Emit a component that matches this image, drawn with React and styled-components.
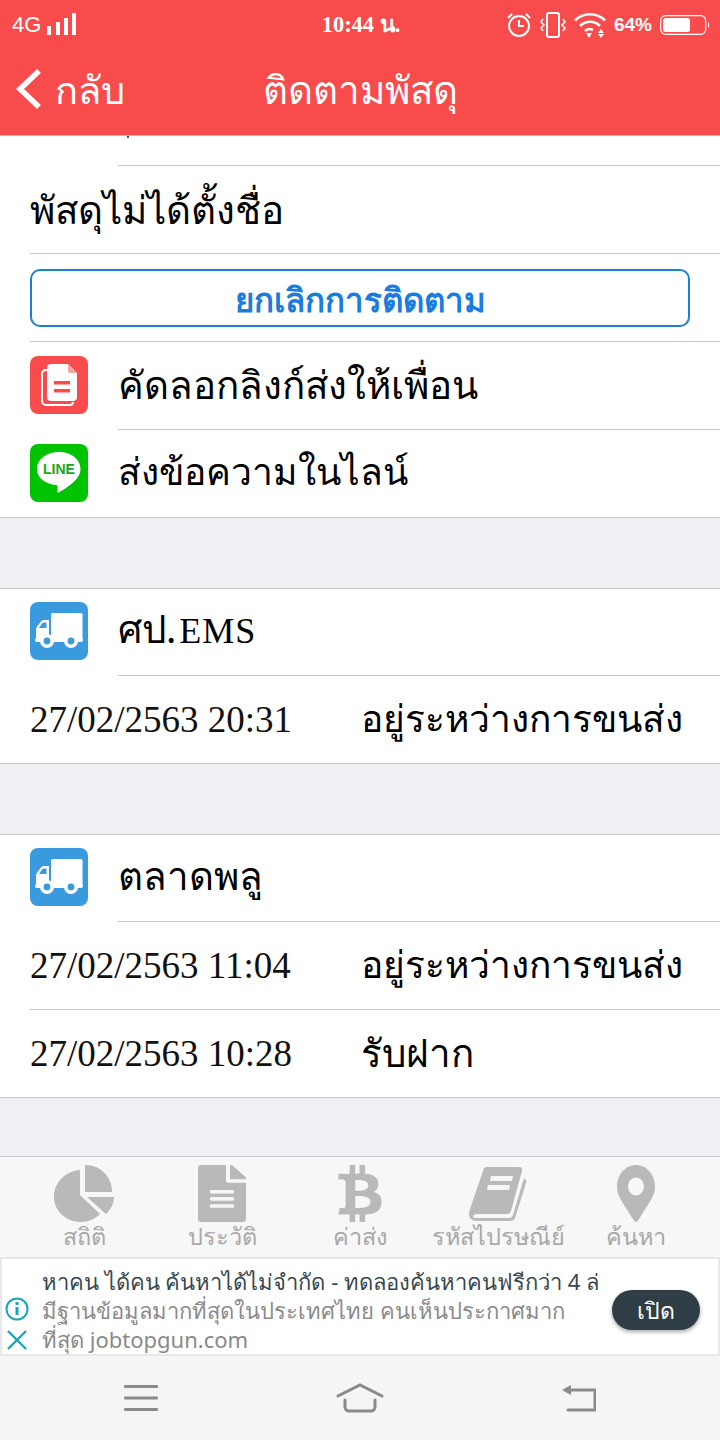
import React from 'react';
import styled, { createGlobalStyle } from 'styled-components';
import { FaFileAlt, FaBtc, FaMapMarkerAlt } from 'react-icons/fa';

const THAI = '"Noto Sans", "DejaVu Sans", "Liberation Sans", sans-serif';

const GlobalStyle = createGlobalStyle`
    html, body {
        margin: 0;
        padding: 0;
        background: #efeff4;
        font-family: ${THAI};
    }
    * { box-sizing: border-box; }
`;

const Page = styled.div`
    width: 720px;
    height: 1440px;
    display: flex;
    flex-direction: column;
    overflow: hidden;
`;

const TopBar = styled.div`
    height: 136px;
    flex: none;
    background: #f84c4c;
    color: #fff;
    border-bottom: 1px solid #d8b8b8;
    display: flex;
    flex-direction: column;
`;

const StatusBar = styled.div`
    height: 50px;
    display: grid;
    grid-template-columns: 1fr auto 1fr;
    align-items: center;
    padding: 0 10px 0 12px;
`;

const StatusGroup = styled.div`
    display: flex;
    align-items: center;
    gap: ${p => p.$gap || 5}px;
    justify-content: ${p => (p.$end ? 'flex-end' : 'flex-start')};
`;

const StatusText = styled.span`
    font-family: ${p => (p.$serif ? '"Liberation Serif", serif' : '"Liberation Sans", sans-serif')};
    font-size: ${p => p.$size || 20}px;
    font-weight: ${p => p.$weight || 700};
    line-height: 24px;
`;

const NavRow = styled.div`
    flex: 1;
    display: grid;
    grid-template-columns: 1fr auto 1fr;
    align-items: center;
    padding: 0 16px 8px;
`;

const BackLink = styled.div`
    display: flex;
    align-items: center;
    gap: 13px;
    font-size: 38px;
    line-height: 48px;
`;

const Title = styled.div`
    font-size: 38.500px;
    line-height: 48px;
`;

const Content = styled.div`
    flex: 1;
    display: flex;
    flex-direction: column;
    min-height: 0;
    overflow: hidden;
`;

const Section = styled.section`
    flex: none;
    background: #fff;
    border-top: ${p => (p.$noTop ? 'none' : '1px solid #c8c8c8')};
    border-bottom: 1px solid #c8c8c8;
    margin-bottom: ${p => p.$gap || 0}px;
`;

const Row = styled.div`
    height: ${p => p.$height || 88}px;
    padding: 0 30px ${p => p.$lift || 0}px;
    display: flex;
    align-items: center;
    position: relative;
    &::after {
        content: '';
        display: ${p => (p.$line ? 'block' : 'none')};
        position: absolute;
        left: ${p => p.$line}px;
        right: 0;
        bottom: 0;
        height: 1px;
        background: #c8c8c8;
    }
`;

const ClippedTail = styled.div`
    width: 2px;
    height: 2px;
    margin-left: 97px;
    align-self: flex-start;
    background: #555;
`;

const RowLabel = styled.div`
    font-size: ${p => p.$size || 38.5}px;
    line-height: 48px;
    color: #000;
    padding-bottom: 3px;
    margin-left: ${p => (p.$icon ? 30 : 0)}px;
    white-space: nowrap;
`;

const LatinPart = styled.span`
    font-family: "Liberation Serif", serif;
    font-size: 36px;
    letter-spacing: 1px;
    margin-left: 3px;
`;

const DateText = styled.div`
    flex: none;
    font-family: "Liberation Serif", serif;
    font-size: 37px;
    line-height: 44px;
    color: #111;
    white-space: nowrap;
    width: 331px;
`;

const StatusLabel = styled.div`
    font-size: ${p => p.$size || 38.5}px;
    line-height: 48px;
    color: #000;
    padding-bottom: 4px;
    white-space: nowrap;
`;

const CancelButton = styled.button`
    width: 100%;
    height: 58px;
    background: #fff;
    border: 2px solid #1a7fd6;
    border-radius: 10px;
    color: #1a7cdc;
    font-family: ${THAI};
    font-size: 33px;
    font-weight: 700;
    padding: 3px 0 0;
`;

const IconTile = styled.div`
    width: 58px;
    height: 58px;
    flex: none;
    border-radius: 8px;
    background: ${p => p.$bg};
    display: flex;
    align-items: center;
    justify-content: center;
`;

const TabBar = styled.nav`
    height: 101px;
    flex: none;
    background: #f7f7f7;
    border-top: 1px solid #c8c8c8;
    padding: 8px 15px 0;
    display: grid;
    grid-template-columns: repeat(5, 1fr);
`;

const Tab = styled.div`
    display: flex;
    flex-direction: column;
    align-items: center;
    color: #b9b9b9;
`;

const TabIcon = styled.div`
    height: 57px;
    display: flex;
    align-items: center;
    justify-content: center;
    & > svg {
        width: ${p => p.$w}px;
        height: ${p => p.$h || 57}px;
    }
`;

const TabLabel = styled.div`
    color: #a8a8a8;
    font-size: 23.500px;
    line-height: 28px;
    white-space: nowrap;
`;

const Ad = styled.div`
    height: 99px;
    flex: none;
    background: #fff;
    border: 2px solid #e8e8e8;
    display: flex;
    align-items: stretch;
    overflow: hidden;
`;

const AdIcons = styled.div`
    width: 40px;
    flex: none;
    display: flex;
    flex-direction: column;
    align-items: center;
    justify-content: flex-end;
    gap: 8px;
    padding: 0 10px 4px 0;
`;

const AdText = styled.div`
    flex: 1;
    min-width: 0;
    padding-top: 7px;
`;

const AdHead = styled.div`
    font-family: ${THAI};
    font-size: 22px;
    line-height: 30px;
    color: #37474f;
    white-space: nowrap;
    overflow: hidden;
`;

const AdBody = styled.div`
    font-family: ${THAI};
    font-size: 22px;
    line-height: 29px;
    color: #8a8a8a;
`;

const AdAction = styled.div`
    width: 106px;
    flex: none;
    display: flex;
    align-items: center;
    justify-content: flex-start;
    padding-top: 6px;
`;

const OpenButton = styled.div`
    width: 88px;
    height: 40px;
    border-radius: 20px;
    background: #2f3e46;
    color: #fff;
    font-size: 23px;
    line-height: 40px;
    text-align: center;
    box-shadow: 0 2px 4px rgba(0, 0, 0, 0.35);
`;

const SystemNav = styled.div`
    height: 84px;
    flex: none;
    background: #f5f5f5;
    display: grid;
    grid-template-columns: repeat(3, 1fr);
    align-items: center;
    justify-items: center;
    padding: 0 31px;
`;

const TruckIcon = () => (
    <svg width="48" height="38" viewBox="0 0 48 38" fill="#fff">
        <path d="M16 2.500a1.500 1.500 0 0 1 1.500-1.500H46a1.500 1.500 0 0 1 1.500 1.500V27a1.500 1.500 0 0 1-1.500 1.500H16z" />
        <path fillRule="evenodd" d="M14 8v20.500H3a2.500 2.500 0 0 1-2-2.500V18q0-2 1.500-4l3-4Q7 8 9 8zM11.500 10.500H9q-1.300 0-2.200 1.200L4 16h7.500z" />
        <rect x="0" y="26" width="48" height="4" rx="2" />
        <circle cx="12" cy="29" r="7" />
        <circle cx="12" cy="29" r="3.400" fill="#3a9ade" />
        <circle cx="36" cy="29" r="7" />
        <circle cx="36" cy="29" r="3.400" fill="#3a9ade" />
    </svg>
);

const CopyIcon = () => (
    <svg width="38" height="44" viewBox="0 0 38 44">
        <path d="M8 7H6a4 4 0 0 0-4 4v27a4 4 0 0 0 4 4h24a3 3 0 0 0 3-3" fill="none" stroke="#fff" strokeWidth="2" />
        <path d="M11 1h17l9 9v24a4 4 0 0 1-4 4H11a4 4 0 0 1-4-4V5a4 4 0 0 1 4-4z" fill="#fff" />
        <path d="M28 1l9 9h-7a2 2 0 0 1-2-2z" fill="#f9a0a0" />
        <rect x="14" y="18" width="16" height="3.500" fill="#f84c4c" />
        <rect x="14" y="26" width="16" height="3.500" fill="#f84c4c" />
    </svg>
);

const LineIcon = () => (
    <svg width="44" height="42" viewBox="0 0 44 42">
        <path d="M22 0C10 0 0 7 0 17c0 9 8 15 19 16 1 0 2 1 1.500 4l0 3c0 1 1 1 2 0 5-3 13-8 17-13 2-3 4-6 4-10C43.500 7 34 0 22 0z" fill="#fff" />
        <text x="22" y="22" textAnchor="middle" fontFamily="Liberation Sans, sans-serif" fontWeight="700" fontSize="14" fill="#1aa51a">LINE</text>
    </svg>
);

const SignalIcon = () => (
    <svg width="30" height="24" viewBox="0 0 30 24" fill="#fff">
        <rect x="0" y="13" width="4" height="9" />
        <rect x="9" y="9" width="4" height="13" />
        <rect x="17" y="5" width="4" height="17" />
        <rect x="25" y="0" width="4" height="22" />
    </svg>
);

const AlarmIcon = () => (
    <svg width="26" height="26" viewBox="0 0 26 26" fill="none" stroke="#fff" strokeWidth="2">
        <circle cx="13" cy="14" r="10" />
        <path d="M13 8v6h5M2 6l4-4M24 6l-4-4" />
    </svg>
);

const VibrateIcon = () => (
    <svg width="26" height="28" viewBox="0 0 26 28" fill="none" stroke="#fff" strokeWidth="2">
        <rect x="7" y="2" width="12" height="24" rx="2" />
        <path d="M3 8L1 11l3 3-3 3 2 3M23 8l2 3-3 3 3 3-2 3" strokeWidth="1.500" />
    </svg>
);

const WifiIcon = () => (
    <svg width="32" height="26" viewBox="0 0 32 26" fill="none" stroke="#fff" strokeWidth="2.600">
        <path d="M1 8.500a21 21 0 0 1 30 0M6 14a14 14 0 0 1 20 0M11 19a7 7 0 0 1 8 -1" />
        <path d="M12 21h6l-3 5z" fill="#fff" stroke="none" />
        <path d="M27 17l3 4h-6zM24 22h6l-3 4z" fill="#fff" stroke="none" />
    </svg>
);

const BatteryIcon = () => (
    <svg width="50" height="22" viewBox="0 0 50 22">
        <rect x="0.700" y="1.700" width="45" height="18.600" rx="5" fill="none" stroke="#fff" strokeWidth="1.200" />
        <rect x="3" y="4" width="27" height="14" rx="2.500" fill="#fff" />
        <path d="M48 8c1.500 1 1.500 5 0 6z" fill="#fff" />
    </svg>
);

const ChevronIcon = () => (
    <svg width="26" height="40" viewBox="0 0 26 40" fill="none" stroke="#fff" strokeWidth="5.500">
        <path d="M23 2L4 20l19 18" />
    </svg>
);

const InfoIcon = () => (
    <svg width="24" height="26" viewBox="0 0 24 26" fill="none" stroke="#19a5bd" strokeWidth="2">
        <circle cx="12" cy="13" r="10.500" />
        <path d="M12 11v8" strokeWidth="3" />
        <circle cx="12" cy="7.500" r="1.700" fill="#19a5bd" stroke="none" />
    </svg>
);

const CloseIcon = () => (
    <svg width="20" height="20" viewBox="0 0 20 20" fill="none" stroke="#19a5bd" strokeWidth="2.400">
        <path d="M1 1l18 18M19 1L1 19" />
    </svg>
);

const MenuKey = () => (
    <svg width="34" height="28" viewBox="0 0 34 28" fill="#8a8a8a">
        <rect x="0" y="1" width="34" height="3" rx="1" />
        <rect x="0" y="12.500" width="34" height="3" rx="1" />
        <rect x="0" y="24" width="34" height="3" rx="1" />
    </svg>
);

const HomeKey = () => (
    <svg width="48" height="30" viewBox="0 0 48 30" fill="none" stroke="#8a8a8a" strokeWidth="3" strokeLinecap="round">
        <path d="M2 13L24 2l22 11" />
        <path d="M9 17v7a4 4 0 0 0 4 4h22a4 4 0 0 0 4-4v-7" />
    </svg>
);

const BackKey = () => (
    <svg width="34" height="28" viewBox="0 0 34 28" fill="none" stroke="#8a8a8a" strokeWidth="3" strokeLinecap="round">
        <path d="M8 6h25v20H6" />
        <path d="M0 6l9-5v10z" fill="#8a8a8a" stroke="none" />
    </svg>
);

const PieIcon = () => (
    <svg viewBox="0 0 60 57" fill="currentColor" preserveAspectRatio="none">
        <path d="M26 5C12 6 0 17 0 32c0 14 12 25 27 25 7 0 14-3 19-8L26 30z" />
        <path d="M31 0c16 0 27 12 27 27H31z" />
        <path d="M33 32h27c0 6-3 12-8 17z" />
    </svg>
);

const BookIcon = () => (
    <svg viewBox="0 0 58 54" fill="currentColor" preserveAspectRatio="none">
        <path
            fillRule="evenodd"
            d="M15 1q1-1 4-1h31q4 0 3 4L42 44q-1 3-4 3H9q-5 0-5 2.500Q4 51 8 51h32q3 0 4-3L55 11q3 2 2 5L46 51q-1 3-5 3H8q-8 0-8-7 0-2 1-5zM22 9l-1 5h22l1-5zM19 18l-1 5h22l1-5z"
        />
    </svg>
);

const TABS = [
    { label: 'สถิติ', Icon: PieIcon, w: 60 },
    { label: 'ประวัติ', Icon: FaFileAlt, w: 48 },
    { label: 'ค่าส่ง', Icon: FaBtc, w: 44 },
    { label: 'รหัสไปรษณีย์', Icon: BookIcon, w: 58, h: 54 },
    { label: 'ค้นหา', Icon: FaMapMarkerAlt, w: 38 },
];

const truck = <IconTile $bg="#3a9ade"><TruckIcon /></IconTile>;

export default function App() {
    return (
        <Page>
            <GlobalStyle />
            <TopBar>
                <StatusBar>
                    <StatusGroup $gap={6}>
                        <StatusText $size={22} $weight={400}>4G</StatusText>
                        <SignalIcon />
                    </StatusGroup>
                    <StatusText $serif $size={22.5}>10:44 น.</StatusText>
                    <StatusGroup $end $gap={8}>
                        <AlarmIcon />
                        <VibrateIcon />
                        <WifiIcon />
                        <StatusText $size={19}>64%</StatusText>
                        <BatteryIcon />
                    </StatusGroup>
                </StatusBar>
                <NavRow>
                    <BackLink><ChevronIcon />กลับ</BackLink>
                    <Title>ติดตามพัสดุ</Title>
                    <div />
                </NavRow>
            </TopBar>
            <Content>
                <Section $noTop $gap={70}>
                    <Row $height={30} $line={118}><ClippedTail /></Row>
                    <Row $line={30}><RowLabel>พัสดุไม่ได้ตั้งชื่อ</RowLabel></Row>
                    <Row $line={30}><CancelButton>ยกเลิกการติดตาม</CancelButton></Row>
                    <Row $line={118} $lift={2}>
                        <IconTile $bg="#f84c4c"><CopyIcon /></IconTile>
                        <RowLabel $icon>คัดลอกลิงก์ส่งให้เพื่อน</RowLabel>
                    </Row>
                    <Row $height={87} $lift={2}>
                        <IconTile $bg="#00c300"><LineIcon /></IconTile>
                        <RowLabel $icon $size={37.2}>ส่งข้อความในไลน์</RowLabel>
                    </Row>
                </Section>
                <Section $gap={70}>
                    <Row $height={87} $line={118} $lift={4}>
                        {truck}
                        <RowLabel $icon>ศป.<LatinPart>EMS</LatinPart></RowLabel>
                    </Row>
                    <Row $height={87}>
                        <DateText>27/02/2563 20:31</DateText>
                        <StatusLabel $size={37.1}>อยู่ระหว่างการขนส่ง</StatusLabel>
                    </Row>
                </Section>
                <Section>
                    <Row $height={87} $line={118} $lift={4}>
                        {truck}
                        <RowLabel $icon>ตลาดพลู</RowLabel>
                    </Row>
                    <Row $line={30}>
                        <DateText>27/02/2563 11:04</DateText>
                        <StatusLabel $size={37.1}>อยู่ระหว่างการขนส่ง</StatusLabel>
                    </Row>
                    <Row $height={87}>
                        <DateText>27/02/2563 10:28</DateText>
                        <StatusLabel>รับฝาก</StatusLabel>
                    </Row>
                </Section>
            </Content>
            <TabBar>
                {TABS.map(({ label, Icon, w, h }) => (
                    <Tab key={label}>
                        <TabIcon $w={w} $h={h}><Icon preserveAspectRatio="none" /></TabIcon>
                        <TabLabel>{label}</TabLabel>
                    </Tab>
                ))}
            </TabBar>
            <Ad>
                <AdIcons>
                    <InfoIcon />
                    <CloseIcon />
                </AdIcons>
                <AdText>
                    <AdHead>หาคน ได้คน ค้นหาได้ไม่จำกัด - ทดลองค้นหาคนฟรีกว่า 4 ล่</AdHead>
                    <AdBody>มีฐานข้อมูลมากที่สุดในประเทศไทย คนเห็นประกาศมาก<br />ที่สุด jobtopgun.com</AdBody>
                </AdText>
                <AdAction><OpenButton>เปิด</OpenButton></AdAction>
            </Ad>
            <SystemNav>
                <MenuKey />
                <HomeKey />
                <BackKey />
            </SystemNav>
        </Page>
    );
}
